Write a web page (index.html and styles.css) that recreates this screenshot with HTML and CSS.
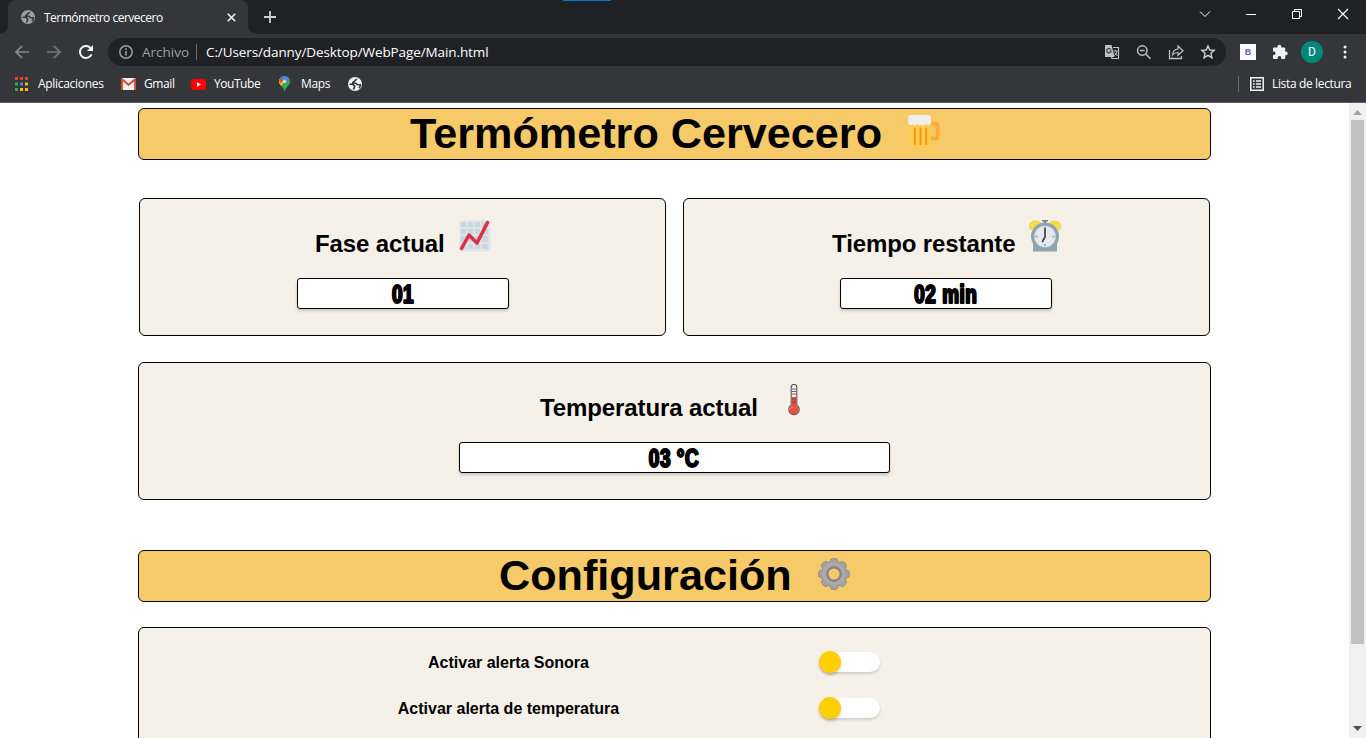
FILE: index.html
```html
<!DOCTYPE html>
<html lang="es">
<head>
<meta charset="utf-8">
<title>Termómetro cervecero</title>
<link rel="stylesheet" href="styles.css">
</head>
<body>
<svg width="0" height="0" class="defs">
  <symbol id="globe" viewBox="0 0 14 14"><circle cx="7" cy="7" r="7" fill="currentColor"/><path d="M8.500 1.800C8.500 3.600 7 3 6.500 4 6 5.200 4.600 4.900 4.600 6.200h3.200c1 0 .8 1.500 1.800 1.500h2.800c0 1.500-.5 2.600-1.600 3.500" fill="none" stroke="var(--hole)" stroke-width="1.500"/><path d="M1.500 7.200h2.700c1.400 0 1.200 1.600 2.500 1.600.4 1.300-.8 1.300-1.200 3.700" fill="none" stroke="var(--hole)" stroke-width="1.600"/></symbol>
</svg>
<div class="browser">
  <header class="tabs">
    <div class="tab">
      <svg class="tab-globe" width="14" height="14"><use href="#globe"/></svg>
      <span class="tab-title">Termómetro cervecero</span>
      <svg class="tab-close" width="9" height="9" viewBox="0 0 9 9"><path d="M.8.8l7.4 7.4M8.2.8L.8 8.2" stroke="#f1f3f4" stroke-width="1.6"/></svg>
    </div>
    <svg class="plus" width="12" height="12" viewBox="0 0 12 12"><path d="M6 0v12M0 6h12" stroke="#d0d1d3" stroke-width="1.8"/></svg>
    <div class="accent"></div>
    <div class="window-buttons">
      <svg width="12" height="12" viewBox="0 0 12 12"><path d="M1 3.500l5 5 5-5" fill="none" stroke="#fff"/></svg>
      <svg width="12" height="12" viewBox="0 0 12 12"><path d="M1 6.500h10" stroke="#fff"/></svg>
      <svg width="12" height="12" viewBox="0 0 12 12"><path d="M1.500 3.500h7v7h-7zM3.500 3v-1.500h7v7H9" fill="none" stroke="#fff"/></svg>
      <svg width="12" height="12" viewBox="0 0 12 12"><path d="M1 1l10 10M11 1L1 11" stroke="#fff" stroke-width="1.100"/></svg>
    </div>
  </header>

  <div class="toolbar">
    <svg class="nav" width="14" height="14" viewBox="0 0 14 14"><path d="M14 7H1M7.200 .8L1 7l6.200 6.200" fill="none" stroke="#87888b" stroke-width="1.700"/></svg>
    <svg class="nav" width="14" height="14" viewBox="0 0 14 14"><path d="M0 7h13M6.800 .8L13 7l-6.200 6.200" fill="none" stroke="#77787b" stroke-width="1.700"/></svg>
    <svg class="nav" width="14" height="14" viewBox="0 0 14 14"><path d="M12.500 9.300A6 6 0 1 1 11.500 3" fill="none" stroke="#f1f3f4" stroke-width="2"/><path d="M14 0v6H8z" fill="#f1f3f4"/></svg>
    <div class="omnibox">
      <svg width="14" height="14" viewBox="0 0 14 14"><circle cx="7" cy="7" r="6.200" fill="none" stroke="#9aa0a6" stroke-width="1.500"/><path d="M7 6v4.500M7 3.300v1.600" stroke="#9aa0a6" stroke-width="1.600"/></svg>
      <span class="scheme">Archivo</span>
      <span class="bar"></span>
      <span class="url">C:/Users/danny/Desktop/WebPage/Main.html</span>
      <div class="actions">
        <svg width="16" height="16" viewBox="0 0 16 16"><path d="M1 1h6.500l3 12H1z" fill="#bdc1c6"/><path d="M9 3.500h5.500v11H8l-.5-2" fill="none" stroke="#bdc1c6" stroke-width="1.200"/><path d="M7 5.500A2.300 2.300 0 1 0 7 8V7H5.300" fill="none" stroke="#35363a" stroke-width="1.100"/><path d="M9.500 7h4M11.500 6v1M13 7q-.5 3-2.500 4.500M10.500 8.500l3 3.500" fill="none" stroke="#bdc1c6"/></svg>
        <svg width="16" height="16" viewBox="0 0 16 16"><circle cx="6.300" cy="6.500" r="4.700" fill="none" stroke="#bdc1c6" stroke-width="1.500"/><path d="M4 6.500h4.600M9.700 10L14.500 14.800" stroke="#bdc1c6" stroke-width="1.600"/></svg>
        <svg width="16" height="16" viewBox="0 0 16 16"><path d="M1.500 6v8.500h12V12" fill="none" stroke="#bdc1c6" stroke-width="1.300"/><path d="M4.500 11c.3-4 2-5.800 5.500-6V2l5 4.700-5 4.600V8.500c-2.500 0-4.200.8-5.500 2.500z" fill="none" stroke="#bdc1c6" stroke-width="1.200"/></svg>
        <svg width="16" height="16" viewBox="0 0 16 16"><path d="M8 2l1.800 4 4.400.4-3.300 2.900 1 4.400L8 11.400l-3.900 2.300 1-4.400-3.300-2.900L6.200 6z" fill="none" stroke="#d0d3d6" stroke-width="1.400"/></svg>
      </div>
    </div>
    <div class="ext-b">B</div>
    <svg class="puzzle" width="16" height="16" viewBox="0 0 16 16"><path d="M2 3.500h3.500V2.700a1.900 1.900 0 0 1 3.800 0v.8h2.900q1 0 1 1v3h.6a1.900 1.900 0 0 1 0 3.800h-.6v2.700q0 1-1 1H9.400V14a1.900 1.900 0 0 0-3.800 0v1H2q-1 0-1-1v-3h.8a1.800 1.800 0 0 0 0-3.600H1v-3q0-.9 1-.9z" fill="#f1f3f4"/></svg>
    <div class="avatar">D</div>
    <svg class="dots" width="4" height="14" viewBox="0 0 4 14"><circle cx="2" cy="2" r="1.500" fill="#f1f3f4"/><circle cx="2" cy="7" r="1.500" fill="#f1f3f4"/><circle cx="2" cy="12" r="1.500" fill="#f1f3f4"/></svg>
  </div>

  <nav class="bookmarks">
    <svg width="13" height="14" viewBox="0 0 13 14"><path d="M0 0h3v3H0zM5 0h3v3H5zM10 0h3v3h-3z" fill="#ea4335"/><path d="M0 5.500h3v3H0z" fill="#34a853"/><path d="M5 5.500h3v3H5z" fill="#4285f4"/><path d="M10 5.500h3v3h-3z" fill="#fbbc05"/><path d="M0 11h3v3H0z" fill="#34a853"/><path d="M5 11h3v3H5zM10 11h3v3h-3z" fill="#fbbc05"/></svg>
    <span class="bm apps">Aplicaciones</span>
    <svg width="15" height="12" viewBox="0 0 15 12"><path d="M0 0h15v12H0z" fill="#f2f2f2"/><path d="M1 12V1.200l6.500 5.600L14 1.200V12" fill="none" stroke="#db4437" stroke-width="1.900"/></svg>
    <span class="bm gmail">Gmail</span>
    <svg width="15" height="11" viewBox="0 0 15 11"><rect width="15" height="11" rx="2.500" fill="#f00"/><path d="M6 3.200v4.600l4-2.300z" fill="#fff"/></svg>
    <span class="bm yt">YouTube</span>
    <svg width="11" height="16" viewBox="0 0 11 16"><path d="M5.500 0A5.300 5.300 0 0 0 1 8.500C3 11 5 12 5.500 16 6 12 11 9.500 11 5.500A5.500 5.500 0 0 0 5.500 0" fill="#34a853"/><path d="M1.200 2.200L5 6 2.500 10C.5 8 0 7 .1 5c0-1 .4-2 1.100-2.800" fill="#fbbc05"/><path d="M1.200 2.300A5.500 5.500 0 0 1 10 2.400L5.500 7z" fill="#4285f4"/><path d="M1.200 2.200L.1 5 2 7l3-2.500z" fill="#ea4335"/><circle cx="5.500" cy="5.300" r="1.900" fill="#bcd3fa"/></svg>
    <span class="bm maps">Maps</span>
    <svg class="bm-globe" width="14" height="14"><use href="#globe"/></svg>
    <div class="reading">
      <svg width="14" height="14" viewBox="0 0 14 14"><path d="M.8.8h12.400v12.400H.8z" fill="none" stroke="#f1f3f4" stroke-width="1.500"/><path d="M3 4h1.700M3 7h1.700M3 10h1.700M6 4h5M6 7h5M6 10h5" stroke="#f1f3f4" stroke-width="1.700"/></svg>
      <span class="bm list">Lista de lectura</span>
    </div>
  </nav>

  <div class="view">
    <main class="page">
      <h1 class="banner top">
        <span>Termómetro Cervecero</span>
        <svg width="32" height="34" viewBox="0 0 32 34"><path d="M22 8.500h5q2.800 0 2.800 3v9q0 3-2.800 3h-5" fill="none" stroke="#ffac33" stroke-width="4"/><path d="M2 7h21v23q0 4-4 4H6q-4 0-4-4z" fill="#ffcc4d"/><path d="M6.800 13.500v15.500M12.500 13.500v15.500M18.200 13.500v15.500" stroke="#f4900c" stroke-width="1.800" stroke-linecap="round"/><path d="M2.500 0h18Q23 0 23 3v4q0 3-3 3-1.500 0-2.500-1-2 2.500-4 .5-2 2-4.500-.2Q7 11.500 5 9.500q-5 1.500-5-3V3Q0 0 2.500 0z" fill="#eee"/></svg>
      </h1>

      <div class="pair">
        <section class="card phase">
          <h2><span>Fase actual</span>
            <svg width="32" height="32" viewBox="0 0 32 32"><rect width="31" height="31" x=".5" y=".5" rx="3" fill="#dce5ea"/><path d="M2 2h5v5H2zM9 2h5v5H9zM16 2h5v5h-5zM23 2h6v5h-6zM2 9h5v5H2zM9 9h5v5H9zM16 9h5v5h-5zM23 9h6v5h-6zM2 16h5v6H2zM9 16h5v6H9zM16 16h5v6h-5zM23 16h6v6h-6zM2 24h5v5H2zM9 24h5v5H9zM16 24h5v5h-5zM23 24h6v5h-6z" fill="#ccd6dd"/><path d="M2.500 28.500L10 15l8 8L28.500 2.500" fill="none" stroke="#dd2e44" stroke-width="3.500" stroke-linecap="round" stroke-linejoin="round"/></svg>
          </h2>
          <div class="value"><span class="v1">01</span></div>
        </section>
        <section class="card time">
          <h2><span>Tiempo restante</span>
            <svg width="32" height="32" viewBox="0 0 32 32"><path d="M13 0h6v1.500h-2V4h-2V1.500h-2z" fill="#71828b"/><path d="M.5 8Q-.5 1 7 1q3 0 4.500 2L2 10zM31.500 8Q32.500 1 25 1q-3 0-4.500 2L30 10z" fill="#fadf3f" stroke="#e8ca42" stroke-width=".6"/><path d="M4 24h24v7.500H4z" fill="#90a4ae"/><circle cx="16" cy="16.500" r="12.400" fill="#d5dee3" stroke="#90a4ae" stroke-width="3.200"/><circle cx="16" cy="16.500" r="10" fill="#e3e9ed"/><path d="M16 8v9l-2.500 4.500" fill="none" stroke="#424242" stroke-width="1.700" stroke-linecap="round"/><path d="M6.500 16.500h2M23.500 16.500h2M16 24v2" stroke="#93a1a8" stroke-width="1.500"/></svg>
          </h2>
          <div class="value"><span class="v2">02 min</span></div>
        </section>
      </div>

      <section class="card temp">
        <h2><span>Temperatura actual</span>
          <svg width="12" height="32" viewBox="0 0 12 32"><path d="M3.200 21V3.500q0-3 2.800-3t2.800 3V21a5.200 5.200 0 1 1-5.600 0z" fill="#f5f5f5" stroke="#555" stroke-width="1.100"/><path d="M3.700 13h4.600v9h-4.600z" fill="#e64a38"/><circle cx="6" cy="25.700" r="4.700" fill="#ea4f3c"/><path d="M4 5h4M4 7.500h4M4 10h4M4 15h4M4 18h4" stroke="#6b4a4a" stroke-width=".9"/><path d="M3 24.500q.5-1.200 1.500-1.500" stroke="#ffb0a5" fill="none"/></svg>
        </h2>
        <div class="value"><span class="v3">03 °C</span></div>
      </section>

      <h1 class="banner config">
        <span>Configuración</span>
        <svg width="32" height="32" viewBox="-16 -16 32 32"><g fill="#a2a2a2" stroke="#858585" stroke-width=".8" stroke-linejoin="round"><path id="tooth" d="M-5-10L-3-15q3-.9 6 0L5-10V10L3 15q-3 .9-6 0L-5 10z"/><use href="#tooth" transform="rotate(45)"/><use href="#tooth" transform="rotate(90)"/><use href="#tooth" transform="rotate(135)"/></g><circle r="11.800" fill="#aaa"/><circle r="6.700" fill="#f6ca69" stroke="#858585" stroke-width="2.400"/></svg>
      </h1>

      <section class="card settings">
        <div class="setting"><span class="label">Activar alerta Sonora</span><span class="switch"><i></i></span></div>
        <div class="setting"><span class="label">Activar alerta de temperatura</span><span class="switch"><i></i></span></div>
      </section>
    </main>
    <aside class="scroll">
      <svg width="9" height="5" viewBox="0 0 9 5"><path d="M0 5L4.500 0 9 5z" fill="#a3a3a3"/></svg>
      <div class="thumb"></div>
      <svg class="down" width="9" height="5" viewBox="0 0 9 5"><path d="M0 0l4.500 5L9 0z" fill="#505050"/></svg>
    </aside>
  </div>
</div>
</body>
</html>
```
FILE: styles.css
```css
* { box-sizing: border-box; }
body { margin: 0; background: #fff; font-family: "Liberation Sans", Arial, sans-serif; overflow: hidden; }
svg { display: block; flex: none; }
.defs { position: absolute; }
.browser { width: 1366px; height: 738px; display: flex; flex-direction: column; overflow: hidden; }

/* Tab strip */
.tabs { height: 34px; flex: none; background: #202124; display: flex; align-items: center; position: relative;
  font-family: "Open Sans", "Noto Sans", sans-serif; }
.tab { width: 240px; height: 34px; margin-left: 8px; padding: 0 12px 0 13px; background: #35363a; border-radius: 8px 8px 0 0;
  display: flex; align-items: center; position: relative; }
.tab::before, .tab::after { content: ""; position: absolute; bottom: 0; width: 8px; height: 8px; }
.tab::before { left: -8px; background: radial-gradient(circle at 0 0, #202124 7.500px, #35363a 8px); }
.tab::after { right: -8px; background: radial-gradient(circle at 100% 0, #202124 7.500px, #35363a 8px); }
.tab-globe { color: #9aa0a6; --hole: #35363a; }
.tab-title { margin-left: 9px; font-size: 12px; color: #fff; white-space: nowrap; letter-spacing: -.5px; }
.tab-close { margin-left: auto; }
.plus { margin-left: 16px; }
.accent { position: absolute; left: 563px; top: 0; width: 48px; height: 1px; background: #0078d7; }
.window-buttons { margin-left: auto; padding-right: 17px; display: flex; gap: 34px; position: relative; height: 28px; align-items: center; align-self: flex-start; }

/* Toolbar */
.toolbar { height: 36px; flex: none; background: #35363a; padding-left: 15px; display: flex; align-items: center;
  font-family: "Open Sans", "Noto Sans", sans-serif; }
.nav { margin-right: 18px; }
.nav:nth-child(3) { margin-right: 15px; }
.omnibox { width: 1118px; height: 28px; background: #202124; border-radius: 14px; padding: 0 10px 0 11px; display: flex; align-items: center; }
.scheme { width: 48px; margin-left: 9px; font-size: 13.500px; color: #9aa0a6; white-space: nowrap; }
.bar { width: 1px; height: 16px; background: #6b6e72; margin-left: 6px; }
.url { margin-left: 9px; font-size: 13.500px; color: #fff; white-space: nowrap; letter-spacing: -.1px; }
.actions { margin-left: auto; display: flex; gap: 16px; }
.ext-b { width: 16px; height: 16px; margin-left: 14px; background: #fff; color: #6a5acd; font: bold 9px/16px "Liberation Sans", sans-serif; text-align: center; }
.puzzle { margin-left: 16px; }
.avatar { width: 22px; height: 22px; margin-left: 13px; border-radius: 50%; background: #00897b; color: #fff; font: 12px/22px Roboto, sans-serif; text-align: center; }
.dots { margin-left: 20px; }

/* Bookmarks */
.bookmarks { height: 33px; flex: none; background: #35363a; border-bottom: 1px solid #5f6063; padding: 0 14px 4px 15px; display: flex; align-items: center;
  font-family: "Open Sans", "Noto Sans", sans-serif; font-size: 12px; line-height: 16px; color: #fff; }
.bm { white-space: nowrap; margin-left: 8px; padding-bottom: 1px; }
.apps { width: 67px; margin-right: 16px; margin-left: 10px; letter-spacing: -.3px; }
.gmail { width: 31px; margin-right: 16px; letter-spacing: -.4px; }
.yt { width: 46px; margin-right: 19px; letter-spacing: -.45px; }
.maps { width: 29px; margin-right: 18px; margin-left: 11px; letter-spacing: -.35px; }
.bm-globe { color: #f1f3f4; --hole: #35363a; }
.reading { margin-left: auto; height: 16px; border-left: 1px solid #6b6c70; padding-left: 11px; display: flex; align-items: center; }
.list { width: 80px; letter-spacing: -.35px; }

/* Page */
.view { flex: 1; min-height: 0; display: flex; }
.page { width: 1349px; padding: 5px 0 0 138px; overflow: hidden; }
.banner { width: 1073px; height: 52px; margin: 0; border: 1px solid #000; border-radius: 6px; background: #f6ca69;
  display: flex; align-items: center; font-size: 43.200px; line-height: 50px; font-weight: bold; white-space: nowrap; }
.banner span { padding-bottom: 2px; }
.top { padding-left: 271px; }
.top span { width: 498px; }
.top svg { margin-bottom: 4px; }
.config { margin-top: 50px; padding-left: 360px; }
.config span { width: 319px; }
.config svg { margin-bottom: 4px; }
.pair { display: flex; gap: 17px; margin: 38px 0 26px 1px; }
.card { background: #f5f0e8; border: 1px solid #000; border-radius: 6px; }
.phase, .time { width: 527px; height: 138px; }
.temp { width: 1073px; height: 138px; }
.card h2 { height: 49px; margin: 21px 0 0; display: flex; align-items: flex-start; font-size: 24px; line-height: 28px; letter-spacing: -.1px; white-space: nowrap; }
.card h2 span { margin-top: 10px; }
.phase h2 { padding-left: 175px; }
.phase h2 span { width: 144px; }
.time h2 { padding-left: 148px; }
.time h2 span { width: 197px; }
.temp h2 { padding-left: 401px; }
.temp h2 span { width: 248px; }
.card .value { height: 31px; margin: 9px auto 0; background: #fff; border: 1px solid #000; border-radius: 3px; box-shadow: 0 2px 3px rgba(0,0,0,.18);
  display: flex; justify-content: center; font-size: 25.500px; line-height: 30px; font-weight: bold; letter-spacing: .8px; white-space: nowrap;
  -webkit-text-stroke: 2px #000; text-shadow: 1px 0 #000, -1px 0 #000; }
.phase .value, .time .value { width: 212px; }
.time .value { margin-left: 156px; }
.temp .value { width: 431px; }
.value span { transform: scaleX(.74); }
.settings { width: 1073px; height: 160px; margin-top: 25px; padding-top: 11px; }
.setting { height: 46px; display: flex; align-items: center; padding-left: 219px; }
.label { width: 301px; padding-top: 2px; text-align: center; font-size: 16px; font-weight: bold; white-space: nowrap; }
.switch { width: 60px; height: 20px; margin-left: 161px; border-radius: 10px; background: #fff; box-shadow: 0 2px 3px rgba(0,0,0,.15); display: flex; align-items: center; }
.switch i { width: 22px; height: 22px; margin-left: -1px; flex: none; border-radius: 50%; background: #ffcf00; box-shadow: 0 2px 3px rgba(0,0,0,.2); }

/* Scrollbar */
.scroll { width: 17px; background: #f0f0f0; display: flex; flex-direction: column; align-items: center; padding: 7px 0; }
.thumb { width: 13px; height: 524px; margin-top: 5px; background: #c1c1c1; }
.down { margin-top: auto; }
```
